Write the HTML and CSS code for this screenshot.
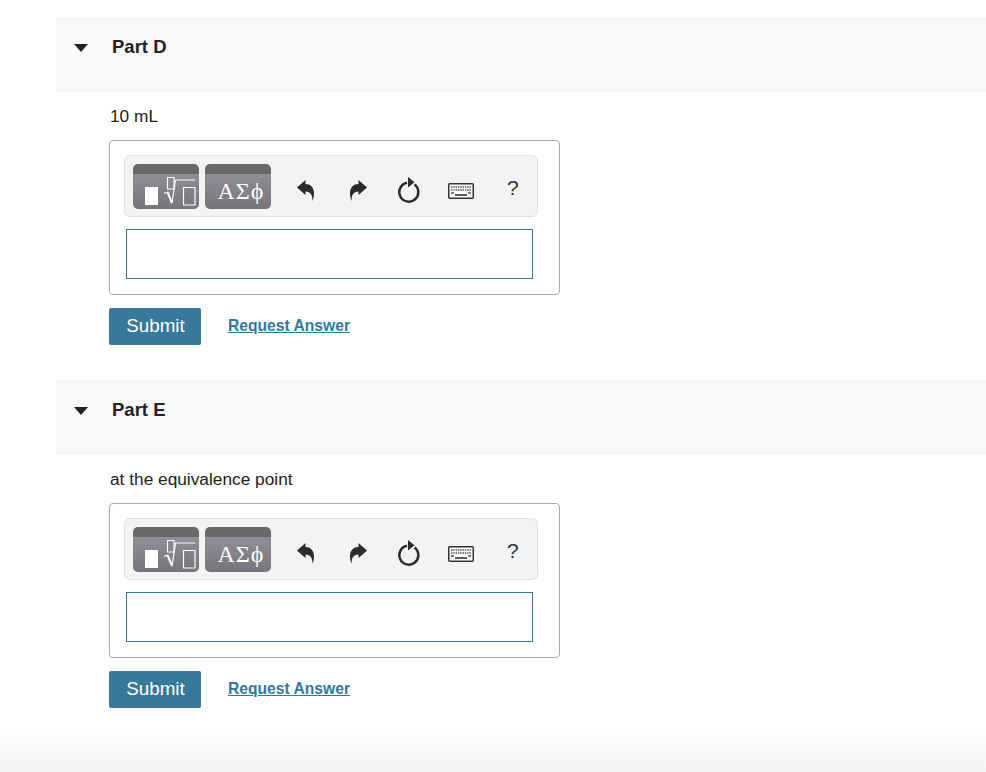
FILE: index.html
```html
<!DOCTYPE html>
<html lang="en">
<head>
<meta charset="utf-8">
<title>Parts</title>
<link rel="stylesheet" href="styles.css">
</head>
<body>
<svg class="defs" width="0" height="0" aria-hidden="true">
  <symbol id="undo" viewBox="0 0 20 22"><path d="M1 8.500 L9.500 1 V5 C16 5 20.500 11 16.500 22 C16.500 16 14.500 12.500 9.500 12.500 V16 Z"/></symbol>
  <symbol id="redo" viewBox="0 0 20 22"><path d="M19 8.500 L10.500 1 V5 C4 5 -.5 11 3.500 22 C3.500 16 5.500 12.500 10.500 12.500 V16 Z"/></symbol>
  <symbol id="reset" viewBox="0 0 24 28"><path d="M10 6.800 A9.500 9.500 0 1 0 17.500 8.500" fill="none" stroke="#2b2b2b" stroke-width="2.500"/><path d="M11 1 L17.500 6.300 L11 11.500 Z" fill="#2b2b2b"/></symbol>
  <symbol id="keyboard" viewBox="0 0 26 16"><rect x=".75" y=".75" width="24.500" height="14.500" rx="1" fill="#fff" stroke="#333" stroke-width="1.500"/><path d="M3 4h20M3 7h20" stroke="#555" stroke-width="1.600" stroke-dasharray="1.500 .8"/><path d="M3 10h3M20 10h3" stroke="#555" stroke-width="1.600"/><path d="M7 12h12" stroke="#333" stroke-width="1.600"/></symbol>
  <symbol id="template" viewBox="0 0 66 45"><rect x="12" y="23" width="13" height="18" fill="#fff"/><path d="M34.500 13.500h6.500v11.500h-6.500z" fill="none" stroke="#fff" stroke-width="1.100"/><path d="M31 29.500l3.500-1.500" fill="none" stroke="#fff" stroke-width="1.200"/><path d="M34.500 28l4.500 11" fill="none" stroke="#fff" stroke-width="2"/><path d="M39 39l3.500-23h19.500" fill="none" stroke="#fff" stroke-width="1.200"/><path d="M50.500 23.500h11.500v17.500h-11.500z" fill="none" stroke="#fff" stroke-width="1.200"/></symbol>
</svg>

<main class="page">
  <section class="part">
    <header class="part-head">
      <span class="caret"></span>
      <h2 class="part-title">Part D</h2>
    </header>
    <div class="part-body">
      <p class="prompt">10 mL</p>
      <div class="answer-box">
        <div class="toolbar">
          <div class="palette"><button class="pal" type="button"><svg class="pal-svg"><use href="#template"/></svg></button><button class="pal pal-greek" type="button">ΑΣϕ</button></div>
          <div class="tools">
            <svg class="ic ic-arrow"><use href="#undo"/></svg>
            <svg class="ic ic-arrow"><use href="#redo"/></svg>
            <svg class="ic ic-reset"><use href="#reset"/></svg>
            <svg class="ic ic-key"><use href="#keyboard"/></svg>
            <span class="help">?</span>
          </div>
        </div>
        <div class="field"></div>
      </div>
      <div class="actions">
        <button class="submit" type="button">Submit</button>
        <a class="request" href="#">Request Answer</a>
      </div>
    </div>
  </section>

  <section class="part">
    <header class="part-head">
      <span class="caret"></span>
      <h2 class="part-title">Part E</h2>
    </header>
    <div class="part-body">
      <p class="prompt">at the equivalence point</p>
      <div class="answer-box">
        <div class="toolbar">
          <div class="palette"><button class="pal" type="button"><svg class="pal-svg"><use href="#template"/></svg></button><button class="pal pal-greek" type="button">ΑΣϕ</button></div>
          <div class="tools">
            <svg class="ic ic-arrow"><use href="#undo"/></svg>
            <svg class="ic ic-arrow"><use href="#redo"/></svg>
            <svg class="ic ic-reset"><use href="#reset"/></svg>
            <svg class="ic ic-key"><use href="#keyboard"/></svg>
            <span class="help">?</span>
          </div>
        </div>
        <div class="field"></div>
      </div>
      <div class="actions">
        <button class="submit" type="button">Submit</button>
        <a class="request" href="#">Request Answer</a>
      </div>
    </div>
  </section>
</main>
<div class="fade"></div>
</body>
</html>
```

FILE: styles.css
```css
* { box-sizing: border-box; }
html, body { margin: 0; padding: 0; height: 772px; overflow: hidden; background: #fff; }
body { font-family: "Liberation Sans", Arial, sans-serif; color: #222; position: relative; }
.defs { position: absolute; }

.page { padding: 17px 0 0 56px; }
.part { margin-bottom: 35px; }
.part-head { height: 75px; background: #f8f8f8; display: flex; align-items: flex-start; padding: 20px 0 0 18px; }
.caret { width: 0; height: 0; margin-top: 7px; border-left: 7px solid transparent; border-right: 7px solid transparent; border-top: 8px solid #222; }
.part-title { margin: 0 0 0 24px; font-size: 18.500px; line-height: 20px; font-weight: 700; color: #222; }

.part-body { padding: 14px 0 0 53px; }
.prompt { margin: 0; padding-left: 1px; height: 20px; font-size: 17.300px; line-height: 20px; color: #222; }

.answer-box { width: 451px; height: 155px; margin-top: 14px; border: 1px solid #aaa; border-radius: 4px; padding: 14px 26px 0 14px; }
.toolbar { width: 414px; height: 62px; background: #f3f3f3; border: 1px solid #e2e2e2; border-radius: 6px; display: flex; align-items: flex-start; padding: 8px 0 0 8px; }
.palette { display: flex; gap: 6px; }
.pal { width: 66px; height: 45px; padding: 0; border: 0; border-radius: 5px; border-top: 10px solid #696969; background: linear-gradient(#8f8f95, #75757b); color: #fff; display: block; overflow: hidden; }
.pal-svg { display: block; width: 66px; height: 45px; margin-top: -10px; }
.pal-greek { padding-left: 6px; font-family: "Liberation Serif", "DejaVu Serif", serif; font-size: 24px; line-height: 35px; letter-spacing: 1px; }

.tools { display: flex; align-items: center; height: 45px; flex: 1; fill: #2b2b2b; }
.ic { display: block; flex: none; }
.ic-arrow { width: 20px; height: 22px; margin-top: 6px; }
.ic-arrow:first-child { margin-left: 25px; }
.ic-arrow + .ic-arrow { margin-left: 32px; }
.ic-reset { width: 24px; height: 28px; margin-left: 29px; margin-top: 6px; }
.ic-key { width: 26px; height: 16px; margin-left: 27px; margin-top: 8px; }
.help { margin-left: 33px; margin-top: 3px; font-size: 21px; line-height: 24px; color: #333; }

.field { width: 407px; height: 50px; margin: 12px 0 0 2px; border: 1px solid #2f7a9c; background: #fff; }

.actions { display: flex; align-items: center; margin-top: 13px; height: 37px; }
.submit { width: 92px; height: 37px; padding: 0 0 2px 1px; border: 0; border-radius: 2px; background: #37799b; color: #fff; font-family: inherit; font-size: 18.800px; }
.request { margin-left: 27px; margin-top: -2px; color: #2f7a9c; font-size: 15.650px; font-weight: 700; text-decoration: underline; }

.fade { position: absolute; left: 0; right: 0; bottom: 0; height: 44px; background: linear-gradient(rgba(243,243,243,0), #f3f3f3); }
```
